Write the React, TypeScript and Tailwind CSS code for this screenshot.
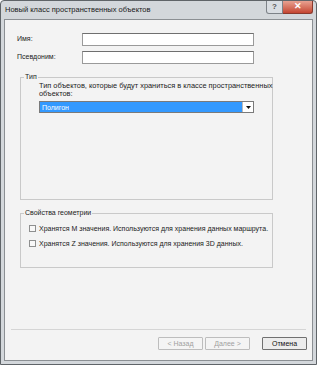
import React from 'react'

const font = { fontFamily: '"Liberation Sans", Arial, sans-serif' }

const GroupBox = ({ title, className, children }: { title: string, className: string, children?: React.ReactNode }) => (
  <div className={`relative border border-[#c9c9c9] ${className}`}>
    <span className="absolute -top-[6px] left-[3px] bg-[#f3f3f3] px-[1px] text-[7px] leading-[10px] text-[#222]">{title}</span>
    {children}
  </div>
)

const Checkbox = ({ label }: { label: string }) => (
  <div className="flex items-center gap-[3px]">
    <span className="h-[7px] w-[7px] border border-[#8e8f8f] bg-[#f8f8f8]" />
    <span className="text-[7px] leading-[9px] text-[#222]">{label}</span>
  </div>
)

const Button = ({ label, disabled }: { label: string, disabled?: boolean }) => (
  <button
    className={`flex h-[13px] w-[45px] items-center justify-center rounded-[1px] border text-[7px] leading-none ${
      disabled ? 'border-[#bdbdbd] bg-[#f4f4f4] text-[#a0a0a0]' : 'border-[#707070] bg-[#ececec] text-[#111]'
    }`}
  >
    {label}
  </button>
)

export default function App() {
  return (
    <div className="h-[366px] w-[318px] bg-white" style={font}>
      <div className="flex h-[365px] w-[317px] flex-col rounded-t-[4px] border border-[#5f6468] bg-[#d3d7db] px-[3px] pb-[3px]">
        {/* title bar */}
        <div className="flex h-[18px] shrink-0 items-start justify-between">
          <span className="mt-[4px] pl-[1px] text-[7.5px] leading-[10px] text-[#1a1a1a]">Новый класс пространственных объектов</span>
          <div className="flex">
            <div className="flex h-[13px] w-[17px] items-center justify-center rounded-bl-[3px] border border-t-0 border-[#7d8288] bg-[#d9dde2] text-[8px] font-bold text-[#555]">?</div>
            <div className="flex h-[13px] w-[30px] items-center justify-center rounded-br-[3px] border border-l-0 border-t-0 border-[#8a3a2e] bg-gradient-to-b from-[#e7a191] to-[#c44431] text-[9px] font-bold text-white">✕</div>
          </div>
        </div>

        {/* client */}
        <div className="flex flex-1 flex-col border border-[#8b8f93] bg-[#f3f3f3]">
          <div className="mt-[13px] flex items-center">
            <span className="w-[77px] pl-[12px] text-[7px] text-[#222]">Имя:</span>
            <div className="h-[13px] w-[172px] border border-[#9a9a9a] border-t-[#6f6f6f] bg-white" />
          </div>
          <div className="mt-[5px] flex items-center">
            <span className="w-[77px] pl-[12px] text-[7px] text-[#222]">Псевдоним:</span>
            <div className="h-[13px] w-[172px] border border-[#9a9a9a] border-t-[#6f6f6f] bg-white" />
          </div>

          <GroupBox title="Тип" className="ml-[15px] mt-[13px] h-[123px] w-[253px]">
            <div className="whitespace-nowrap pl-[18px] pt-[4px] text-[7.4px] leading-[8px] text-[#222]">
              Тип объектов, которые будут храниться в классе пространственных
              <br />
              объектов:
            </div>
            <div className="ml-[18px] mt-[3px] flex h-[12px] w-[215px] items-center border border-[#7a7a7a] bg-[#3399ff]">
              <span className="flex-1 pl-[2px] text-[7px] leading-none text-white">Полигон</span>
              <span className="flex h-[10px] w-[11px] items-center justify-center border-l border-[#bbb] bg-white">
                <svg width="5" height="3" viewBox="0 0 5 3"><path d="M0 0h5L2.5 3z" fill="#111" /></svg>
              </span>
            </div>
          </GroupBox>

          <GroupBox title="Свойства геометрии" className="ml-[15px] mt-[13px] h-[55px] w-[253px]">
            <div className="flex flex-col gap-[6px] pl-[8px] pt-[10px]">
              <Checkbox label="Хранятся M значения. Используются для хранения данных маршрута." />
              <Checkbox label="Хранятся Z значения. Используются для хранения 3D данных." />
            </div>
          </GroupBox>

          <div className="flex-1" />
          <div className="mx-[6px] h-px bg-[#d5d5d5]" />
          <div className="flex justify-end gap-[2px] pb-[10px] pr-[5px] pt-[7px]">
            <Button label="< Назад" disabled />
            <Button label="Далее >" disabled />
            <div className="w-[8px]" />
            <Button label="Отмена" />
          </div>
        </div>
      </div>
    </div>
  )
}
